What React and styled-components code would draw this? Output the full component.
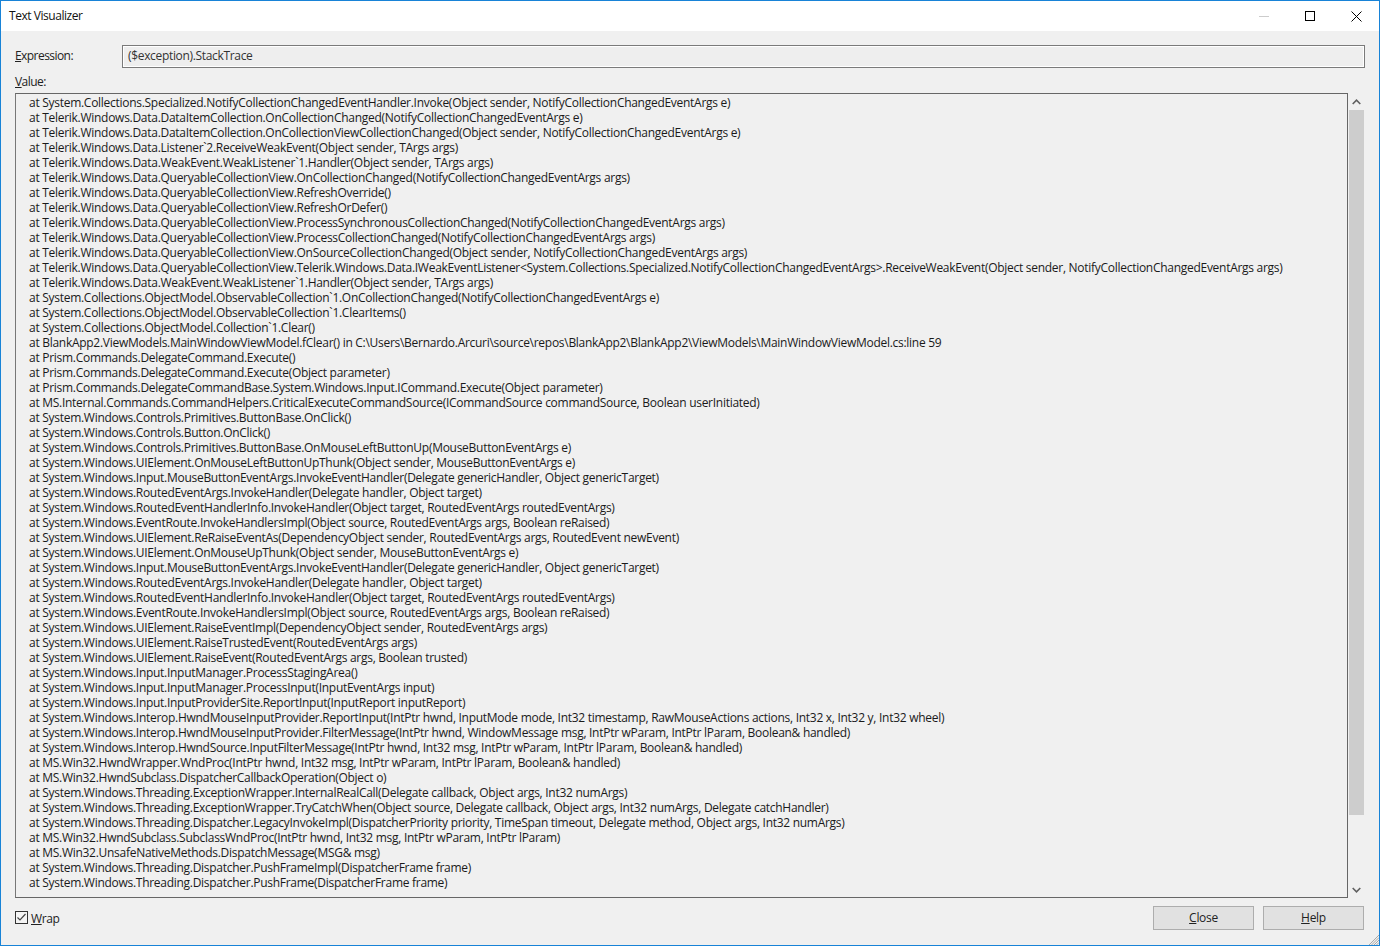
import React from 'react';
import styled, { createGlobalStyle } from 'styled-components';

const Global = createGlobalStyle`
  html, body { margin: 0; padding: 0; background: #f0f0f0; }
  body { font-family: "Open Sans", "Noto Sans", "Liberation Sans", sans-serif; font-size: 12px; color: #000; }
`;

const Win = styled.div`
  position: relative;
  width: 1380px;
  height: 946px;
  box-sizing: border-box;
  border: 1px solid #1883d7;
  display: flex;
  flex-direction: column;
  overflow: hidden;
  background: #f0f0f0;
`;

const TitleBar = styled.header`
  height: 30px;
  flex: none;
  background: #fff;
  display: flex;
  justify-content: space-between;
  padding-left: 8px;
`;

const Title = styled.span`
  font-size: 12px;
  line-height: 30px;
  letter-spacing: -0.45px;
  color: #111;
`;

const Controls = styled.div`
  display: flex;
  height: 30px;
`;

const Control = styled.div`
  width: 46px;
  height: 30px;
  display: flex;
  align-items: center;
  justify-content: center;
`;

const Body = styled.main`
  flex: 1;
  display: flex;
  flex-direction: column;
  padding: 14px;
  min-height: 0;
`;

const ExprRow = styled.div`
  display: flex;
  height: 23px;
`;

const FieldLabel = styled.label`
  display: block;
  letter-spacing: -0.56px;
  line-height: 21px;
  color: #222;
  width: 107px;
  flex: none;
`;

const ExprInput = styled.div`
  flex: 1;
  height: 23px;
  box-sizing: border-box;
  border: 1px solid #7a7a7a;
  box-shadow: inset 0 0 0 1px #fff;
  background: #eeeeee;
  padding: 0 5px;
  line-height: 20px;
  letter-spacing: -0.33px;
  color: #333;
`;

const ValueLabel = styled(FieldLabel)`
  margin-top: 6px;
  height: 19px;
  line-height: 15px;
`;

const ValueRow = styled.div`
  display: flex;
  height: 805px;
`;

const TextBox = styled.div`
  width: 1333px;
  flex: none;
  box-sizing: border-box;
  border: 1px solid #666;
  border-left-color: #777;
  background: #f0f0f0;
  padding: 1px 0 0 13px;
  overflow: hidden;
`;

const Line = styled.div`
  height: 15px;
  line-height: 15px;
  white-space: pre;
  letter-spacing: -0.28px;
  color: #1a1a1a;
`;

const ScrollBar = styled.div`
  width: 15px;
  margin-left: 1px;
  flex: none;
  display: flex;
  flex-direction: column;
`;

const ScrollArrow = styled.div`
  height: 17px;
  flex: none;
  display: flex;
  align-items: center;
  justify-content: center;
`;

const ScrollTrack = styled.div`
  flex: 1;
`;

const ScrollThumb = styled.div`
  height: 705px;
  background: #cdcdcd;
`;

const Footer = styled.footer`
  display: flex;
  align-items: center;
  justify-content: space-between;
  margin-top: 8px;
  height: 24px;
  padding-right: 1px;
`;

const Check = styled.label`
  display: flex;
  align-items: flex-start;
  gap: 3px;
  height: 15px;
  letter-spacing: -0.4px;
  line-height: 15px;
  color: #222;
`;

const CheckBox = styled.span`
  width: 13px;
  height: 13px;
  box-sizing: border-box;
  border: 1px solid #333;
  background: #f4f4f4;
  display: flex;
  align-items: center;
  justify-content: center;
`;

const Buttons = styled.div`
  display: flex;
  gap: 9px;
`;

const Button = styled.button`
  width: 101px;
  height: 24px;
  box-sizing: border-box;
  border: 1px solid #adadad;
  background: #e1e1e1;
  font: inherit;
  letter-spacing: -0.3px;
  color: #222;
  padding: 0 0 2px;
`;

const Grip = styled.svg`
  position: absolute;
  right: 0;
  bottom: 0;
`;

const lines = [
  'at System.Collections.Specialized.NotifyCollectionChangedEventHandler.Invoke(Object sender, NotifyCollectionChangedEventArgs e)',
  'at Telerik.Windows.Data.DataItemCollection.OnCollectionChanged(NotifyCollectionChangedEventArgs e)',
  'at Telerik.Windows.Data.DataItemCollection.OnCollectionViewCollectionChanged(Object sender, NotifyCollectionChangedEventArgs e)',
  'at Telerik.Windows.Data.Listener`2.ReceiveWeakEvent(Object sender, TArgs args)',
  'at Telerik.Windows.Data.WeakEvent.WeakListener`1.Handler(Object sender, TArgs args)',
  'at Telerik.Windows.Data.QueryableCollectionView.OnCollectionChanged(NotifyCollectionChangedEventArgs args)',
  'at Telerik.Windows.Data.QueryableCollectionView.RefreshOverride()',
  'at Telerik.Windows.Data.QueryableCollectionView.RefreshOrDefer()',
  'at Telerik.Windows.Data.QueryableCollectionView.ProcessSynchronousCollectionChanged(NotifyCollectionChangedEventArgs args)',
  'at Telerik.Windows.Data.QueryableCollectionView.ProcessCollectionChanged(NotifyCollectionChangedEventArgs args)',
  'at Telerik.Windows.Data.QueryableCollectionView.OnSourceCollectionChanged(Object sender, NotifyCollectionChangedEventArgs args)',
  'at Telerik.Windows.Data.QueryableCollectionView.Telerik.Windows.Data.IWeakEventListener<System.Collections.Specialized.NotifyCollectionChangedEventArgs>.ReceiveWeakEvent(Object sender, NotifyCollectionChangedEventArgs args)',
  'at Telerik.Windows.Data.WeakEvent.WeakListener`1.Handler(Object sender, TArgs args)',
  'at System.Collections.ObjectModel.ObservableCollection`1.OnCollectionChanged(NotifyCollectionChangedEventArgs e)',
  'at System.Collections.ObjectModel.ObservableCollection`1.ClearItems()',
  'at System.Collections.ObjectModel.Collection`1.Clear()',
  'at BlankApp2.ViewModels.MainWindowViewModel.fClear() in C:\\Users\\Bernardo.Arcuri\\source\\repos\\BlankApp2\\BlankApp2\\ViewModels\\MainWindowViewModel.cs:line 59',
  'at Prism.Commands.DelegateCommand.Execute()',
  'at Prism.Commands.DelegateCommand.Execute(Object parameter)',
  'at Prism.Commands.DelegateCommandBase.System.Windows.Input.ICommand.Execute(Object parameter)',
  'at MS.Internal.Commands.CommandHelpers.CriticalExecuteCommandSource(ICommandSource commandSource, Boolean userInitiated)',
  'at System.Windows.Controls.Primitives.ButtonBase.OnClick()',
  'at System.Windows.Controls.Button.OnClick()',
  'at System.Windows.Controls.Primitives.ButtonBase.OnMouseLeftButtonUp(MouseButtonEventArgs e)',
  'at System.Windows.UIElement.OnMouseLeftButtonUpThunk(Object sender, MouseButtonEventArgs e)',
  'at System.Windows.Input.MouseButtonEventArgs.InvokeEventHandler(Delegate genericHandler, Object genericTarget)',
  'at System.Windows.RoutedEventArgs.InvokeHandler(Delegate handler, Object target)',
  'at System.Windows.RoutedEventHandlerInfo.InvokeHandler(Object target, RoutedEventArgs routedEventArgs)',
  'at System.Windows.EventRoute.InvokeHandlersImpl(Object source, RoutedEventArgs args, Boolean reRaised)',
  'at System.Windows.UIElement.ReRaiseEventAs(DependencyObject sender, RoutedEventArgs args, RoutedEvent newEvent)',
  'at System.Windows.UIElement.OnMouseUpThunk(Object sender, MouseButtonEventArgs e)',
  'at System.Windows.Input.MouseButtonEventArgs.InvokeEventHandler(Delegate genericHandler, Object genericTarget)',
  'at System.Windows.RoutedEventArgs.InvokeHandler(Delegate handler, Object target)',
  'at System.Windows.RoutedEventHandlerInfo.InvokeHandler(Object target, RoutedEventArgs routedEventArgs)',
  'at System.Windows.EventRoute.InvokeHandlersImpl(Object source, RoutedEventArgs args, Boolean reRaised)',
  'at System.Windows.UIElement.RaiseEventImpl(DependencyObject sender, RoutedEventArgs args)',
  'at System.Windows.UIElement.RaiseTrustedEvent(RoutedEventArgs args)',
  'at System.Windows.UIElement.RaiseEvent(RoutedEventArgs args, Boolean trusted)',
  'at System.Windows.Input.InputManager.ProcessStagingArea()',
  'at System.Windows.Input.InputManager.ProcessInput(InputEventArgs input)',
  'at System.Windows.Input.InputProviderSite.ReportInput(InputReport inputReport)',
  'at System.Windows.Interop.HwndMouseInputProvider.ReportInput(IntPtr hwnd, InputMode mode, Int32 timestamp, RawMouseActions actions, Int32 x, Int32 y, Int32 wheel)',
  'at System.Windows.Interop.HwndMouseInputProvider.FilterMessage(IntPtr hwnd, WindowMessage msg, IntPtr wParam, IntPtr lParam, Boolean& handled)',
  'at System.Windows.Interop.HwndSource.InputFilterMessage(IntPtr hwnd, Int32 msg, IntPtr wParam, IntPtr lParam, Boolean& handled)',
  'at MS.Win32.HwndWrapper.WndProc(IntPtr hwnd, Int32 msg, IntPtr wParam, IntPtr lParam, Boolean& handled)',
  'at MS.Win32.HwndSubclass.DispatcherCallbackOperation(Object o)',
  'at System.Windows.Threading.ExceptionWrapper.InternalRealCall(Delegate callback, Object args, Int32 numArgs)',
  'at System.Windows.Threading.ExceptionWrapper.TryCatchWhen(Object source, Delegate callback, Object args, Int32 numArgs, Delegate catchHandler)',
  'at System.Windows.Threading.Dispatcher.LegacyInvokeImpl(DispatcherPriority priority, TimeSpan timeout, Delegate method, Object args, Int32 numArgs)',
  'at MS.Win32.HwndSubclass.SubclassWndProc(IntPtr hwnd, Int32 msg, IntPtr wParam, IntPtr lParam)',
  'at MS.Win32.UnsafeNativeMethods.DispatchMessage(MSG& msg)',
  'at System.Windows.Threading.Dispatcher.PushFrameImpl(DispatcherFrame frame)',
  'at System.Windows.Threading.Dispatcher.PushFrame(DispatcherFrame frame)',
];

const App = () => (
  <Win>
    <Global />
    <TitleBar>
      <Title>Text Visualizer</Title>
      <Controls>
        <Control>
          <svg width="10" height="10"><path d="M0 5.5h10" stroke="#ccc" strokeWidth="1" /></svg>
        </Control>
        <Control>
          <svg width="10" height="10"><rect x="0.5" y="0.5" width="9" height="9" fill="none" stroke="#000" /></svg>
        </Control>
        <Control>
          <svg width="11" height="11"><path d="M0.5 0.5l10 10M10.5 0.5l-10 10" stroke="#000" strokeWidth="1" fill="none" /></svg>
        </Control>
      </Controls>
    </TitleBar>
    <Body>
      <ExprRow>
        <FieldLabel><u>E</u>xpression:</FieldLabel>
        <ExprInput>($exception).StackTrace</ExprInput>
      </ExprRow>
      <ValueLabel><u>V</u>alue:</ValueLabel>
      <ValueRow>
        <TextBox>
          {lines.map((line, i) => (
            <Line key={i}>{line}</Line>
          ))}
        </TextBox>
        <ScrollBar>
          <ScrollArrow>
            <svg width="9" height="6"><path d="M0.7 5L4.5 1.2 8.3 5" fill="none" stroke="#606060" strokeWidth="1.6" /></svg>
          </ScrollArrow>
          <ScrollTrack><ScrollThumb /></ScrollTrack>
          <ScrollArrow>
            <svg width="9" height="6"><path d="M0.7 1L4.5 4.8 8.3 1" fill="none" stroke="#606060" strokeWidth="1.6" /></svg>
          </ScrollArrow>
        </ScrollBar>
      </ValueRow>
      <Footer>
        <Check>
          <CheckBox>
            <svg width="11" height="11"><path d="M1.5 5.5L4 8 9.5 2" fill="none" stroke="#444" strokeWidth="1.2" /></svg>
          </CheckBox>
          <span><u>W</u>rap</span>
        </Check>
        <Buttons>
          <Button><u>C</u>lose</Button>
          <Button><u>H</u>elp</Button>
        </Buttons>
      </Footer>
    </Body>
    <Grip width="11" height="11"><path d="M11 1L1 11M11 3.5L3.5 11M11 6L6 11M11 8.5L8.5 11" stroke="#a8a8a8" /></Grip>
  </Win>
);

export default App;
